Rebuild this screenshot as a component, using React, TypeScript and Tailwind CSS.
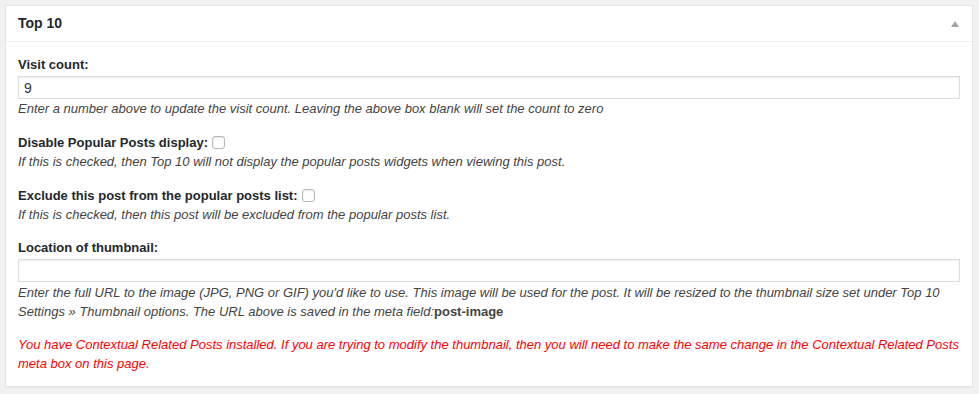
export default function App() {
  return (
    <div className="h-[394px] w-[979px] bg-[#f1f1f1] pt-[5px] pl-[5px] pr-[6px] font-['Liberation_Sans',Arial,sans-serif] text-[13px] text-[#444]">
      <div className="border border-[#e5e5e5] bg-white shadow-[0_1px_1px_rgba(0,0,0,0.04)]">
        {/* Header */}
        <div className="flex h-[36px] items-center justify-between border-b border-[#eee] pl-[12px] pr-[13px]">
          <h2 className="text-[14px] font-bold text-[#23282d]">Top 10</h2>
          <span className="h-0 w-0 border-x-[4px] border-b-[6px] border-x-transparent border-b-[#a0a5aa]" />
        </div>

        {/* Body */}
        <div className="px-[12px] pt-[13px] pb-[13px]">
          <label className="block font-bold leading-[19px] text-[#23282d]">Visit count:</label>
          <input
            type="text"
            defaultValue="9"
            className="mt-[2px] block h-[23px] w-full border border-[#ddd] px-[5px] text-[14px] text-[#32373c] shadow-[inset_0_1px_2px_rgba(0,0,0,0.07)] outline-none"
          />
          <p className="italic leading-[19px]">
            Enter a number above to update the visit count. Leaving the above box blank will set the count to zero
          </p>

          <div className="mt-[15px] flex h-[19px] items-center font-bold leading-[19px] text-[#23282d]">
            Disable Popular Posts display:
            <span className="ml-[4px] inline-block h-[13px] w-[13px] rounded-[3px] border border-[#b4b9be] shadow-[inset_0_1px_2px_rgba(0,0,0,0.1)]" />
          </div>
          <p className="italic leading-[19px]">
            If this is checked, then Top 10 will not display the popular posts widgets when viewing this post.
          </p>

          <div className="mt-[15px] flex h-[19px] items-center font-bold leading-[19px] text-[#23282d]">
            Exclude this post from the popular posts list:
            <span className="ml-[4px] inline-block h-[13px] w-[13px] rounded-[3px] border border-[#b4b9be] shadow-[inset_0_1px_2px_rgba(0,0,0,0.1)]" />
          </div>
          <p className="italic leading-[19px]">
            If this is checked, then this post will be excluded from the popular posts list.
          </p>

          <label className="mt-[14px] block font-bold leading-[19px] text-[#23282d]">Location of thumbnail:</label>
          <input
            type="text"
            className="mt-[2px] block h-[23px] w-full border border-[#ddd] px-[5px] text-[14px] shadow-[inset_0_1px_2px_rgba(0,0,0,0.07)] outline-none"
          />
          <p className="pt-[1px] italic leading-[19px]">
            Enter the full URL to the image (JPG, PNG or GIF) you'd like to use. This image will be used for the post. It will be resized to the thumbnail size set under Top 10 Settings » Thumbnail options. The URL above is saved in the meta field:<strong className="not-italic font-bold">post-image</strong>
          </p>

          <p className="mt-[14px] italic leading-[19px] text-[#f00]">
            You have Contextual Related Posts installed. If you are trying to modify the thumbnail, then you will need to make the same change in the Contextual Related Posts meta box on this page.
          </p>
        </div>
      </div>
    </div>
  );
}
